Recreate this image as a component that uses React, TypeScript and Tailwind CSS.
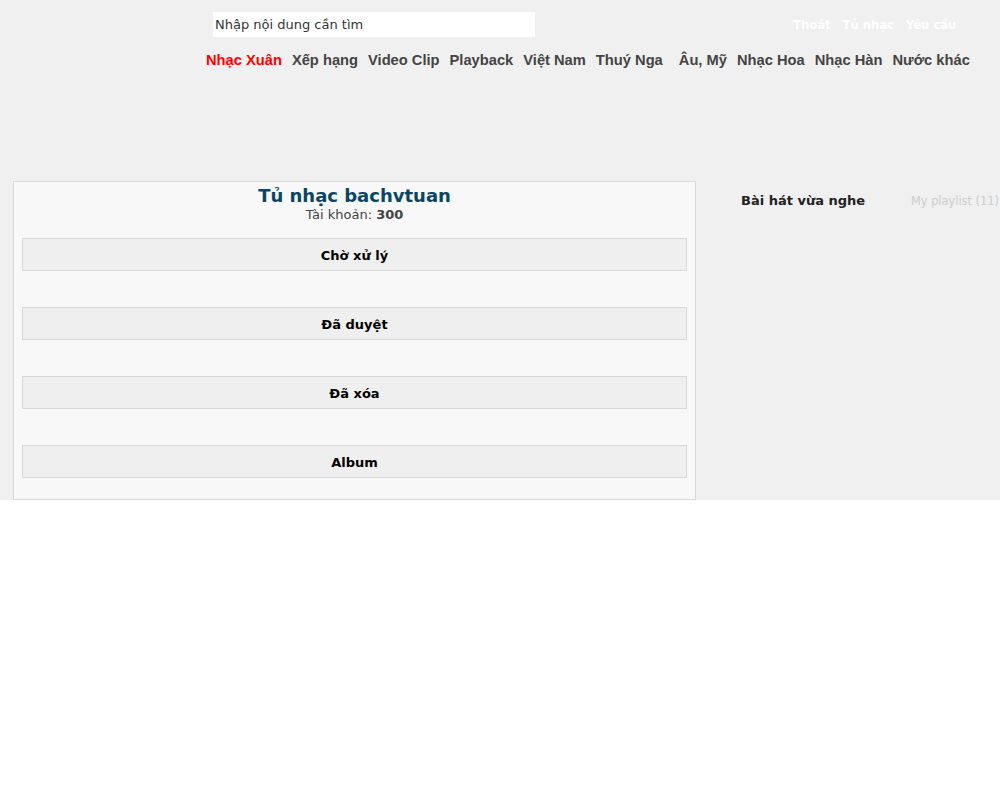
const navItems = [
  { label: 'Nhạc Xuân', active: true },
  { label: 'Xếp hạng' },
  { label: 'Video Clip' },
  { label: 'Playback' },
  { label: 'Việt Nam' },
  { label: 'Thuý Nga', extra: true },
  { label: 'Âu, Mỹ' },
  { label: 'Nhạc Hoa' },
  { label: 'Nhạc Hàn' },
  { label: 'Nước khác' },
];

const sections = ['Chờ xử lý', 'Đã duyệt', 'Đã xóa', 'Album'];

const Header = () => (
  <div className="h-[181px]">
    <div className="flex items-start pt-3 pl-[213px]">
      <input
        className="h-[25px] w-[322px] bg-white px-[2px] text-[13px] text-[#333] outline-none placeholder:text-[#333]"
        placeholder="Nhập nội dung cần tìm"
      />
      <div className="ml-[258px] flex gap-3 pt-[6px] text-[11.6px] leading-[14px] font-bold text-white">
        <a>Thoát</a>
        <a>Tủ nhạc</a>
        <a>Yêu cầu</a>
      </div>
    </div>
    <nav className="mt-[13px] flex gap-[10px] pl-[206px] font-['Liberation_Sans',Arial,sans-serif] text-[14.7px] leading-[20px] font-bold text-[#444]">
      {navItems.map((item) => (
        <a key={item.label} className={`${item.active ? 'text-[#ff0000]' : ''} ${item.extra ? 'mr-[6px]' : ''}`}>
          {item.label}
        </a>
      ))}
    </nav>
  </div>
);

const MusicCabinet = () => (
  <div className="w-[683px] border border-[#d8d8d8] bg-[#f8f8f8] px-2 pb-[21px]">
    <div className="pt-[2px] text-center">
      <h1 className="text-[18px] leading-[24px] font-bold text-[#0a4565]">Tủ nhạc bachvtuan</h1>
      <p className="text-[13px] leading-[14px] text-[#444]">
        Tài khoản: <b>300</b>
      </p>
    </div>
    <div className="mt-[16px] flex flex-col gap-[36px]">
      {sections.map((s) => (
        <div
          key={s}
          className="flex h-[33px] items-center justify-center border border-[#d8d8d8] bg-[#efefef] pt-[2px] text-[13px] font-bold text-black"
        >
          {s}
        </div>
      ))}
    </div>
  </div>
);

const Sidebar = () => (
  <div className="flex flex-1 items-start pt-[13px]">
    <span className="ml-[45px] text-[13px] leading-[14px] font-bold text-[#222]">Bài hát vừa nghe</span>
    <span className="ml-auto mr-[1px] text-[11.4px] leading-[14px] text-[#ccc]">My playlist (11)</span>
  </div>
);

export default function App() {
  return (
    <div className="min-h-[800px] bg-white font-['DejaVu_Sans',Verdana,sans-serif]">
      <div className="h-[500px] bg-[#f0f0f0]">
        <Header />
        <div className="flex pl-[13px]">
          <MusicCabinet />
          <Sidebar />
        </div>
      </div>
    </div>
  );
}
